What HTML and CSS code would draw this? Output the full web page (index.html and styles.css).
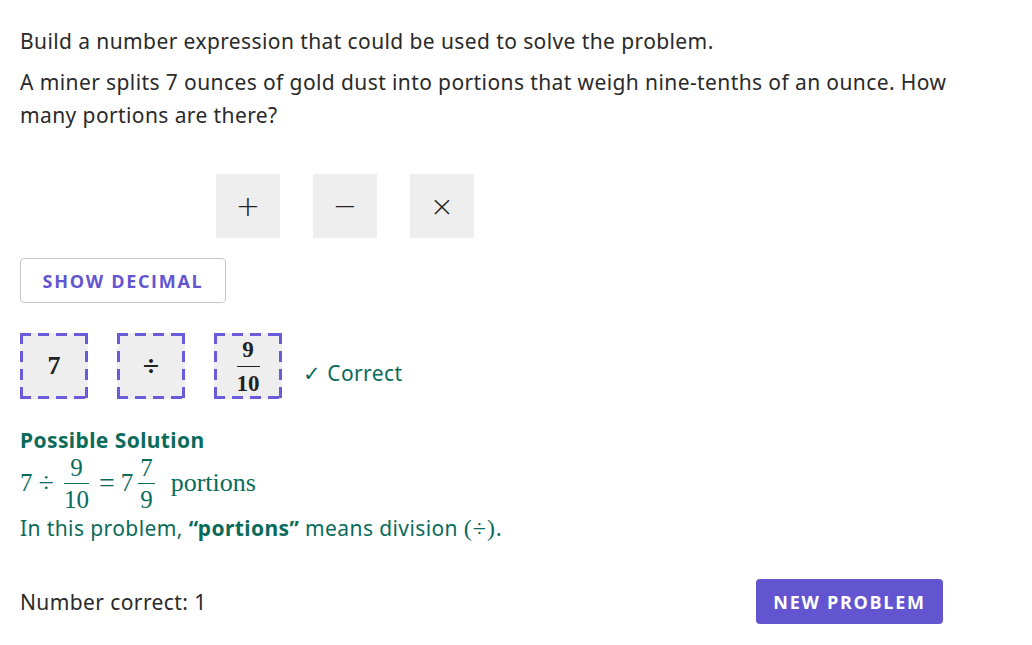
FILE: index.html
```html
<!DOCTYPE html>
<html lang="en">
<head>
<meta charset="utf-8">
<title>Build a number expression</title>
<link rel="stylesheet" href="styles.css">
</head>
<body>
<main class="page">
  <p class="prompt">Build a number expression that could be used to solve the problem.</p>
  <p class="problem">A miner splits 7 ounces of gold dust into portions that weigh nine-tenths of an ounce. How many portions are there?</p>

  <div class="palette">
    <div class="tile"><span class="op">+</span></div>
    <div class="tile"><span class="op">&minus;</span></div>
    <div class="tile"><span class="op">&times;</span></div>
  </div>

  <button class="btn-outline">SHOW DECIMAL</button>

  <div class="answer-row">
    <div class="slot"><span class="num">7</span></div>
    <div class="slot"><span class="slot-op">&divide;</span></div>
    <div class="slot">
      <span class="frac slot-frac"><span class="frac-top">9</span><span class="frac-bot">10</span></span>
    </div>
    <div class="feedback">&#10003; Correct</div>
  </div>

  <section class="solution">
    <h3 class="solution-title">Possible Solution</h3>
    <div class="math">
      <span>7</span><span class="mop">&divide;</span>
      <span class="frac"><span class="frac-top">9</span><span class="frac-bot">10</span></span>
      <span class="mop">=</span><span>7</span>
      <span class="frac mixed"><span class="frac-top">7</span><span class="frac-bot">9</span></span>
      <span class="word">portions</span>
    </div>
    <p class="explain">In this problem, <strong>&ldquo;portions&rdquo;</strong> means division <span class="paren">(&divide;)</span>.</p>
  </section>

  <footer class="footer">
    <span class="count">Number correct: 1</span>
    <button class="btn-primary">NEW PROBLEM</button>
  </footer>
</main>
</body>
</html>
```

FILE: styles.css
```css
* { box-sizing: border-box; }
html, body { margin: 0; padding: 0; background: #ffffff; }
body {
  font-family: "Noto Sans", "Open Sans", sans-serif;
  color: #2a2a2a;
  font-size: 21px;
  letter-spacing: 0.4px;
}
.page {
  width: 1012px;
  padding: 25px 0 0 20px;
}
.prompt {
  margin: 0;
  line-height: 33px;
}
.problem {
  margin: 8px 0 0;
  line-height: 33px;
  max-width: 965px;
}
.palette {
  display: flex;
  gap: 33px;
  margin: 42px 0 0 196px;
}
.tile {
  width: 64px;
  height: 64px;
  background: #eeeeee;
  display: flex;
  align-items: center;
  justify-content: center;
}
.op {
  font-family: "DejaVu Sans", sans-serif;
  font-weight: 200;
  font-size: 29px;
  line-height: 1;
  color: #222;
  letter-spacing: 0;
}
.btn-outline {
  display: block;
  margin-top: 20px;
  width: 206px;
  height: 45px;
  border: 1px solid #c8c8cc;
  border-radius: 4px;
  background: #fff;
  color: #6355d0;
  font-family: "Open Sans", sans-serif;
  font-weight: 700;
  font-size: 18px;
  letter-spacing: 1.7px;
  padding: 0;
}
.answer-row {
  display: flex;
  align-items: center;
  gap: 29px;
  margin-top: 30px;
}
.slot {
  width: 68px;
  height: 66px;
  display: flex;
  align-items: center;
  justify-content: center;
  background:
    repeating-linear-gradient(90deg, #6a5bd8 0 11px, transparent 11px 18px) left top / 100% 3px no-repeat,
    repeating-linear-gradient(90deg, #6a5bd8 0 11px, transparent 11px 18px) left bottom / 100% 3px no-repeat,
    repeating-linear-gradient(180deg, #6a5bd8 0 11px, transparent 11px 18px) left top / 3px 100% no-repeat,
    repeating-linear-gradient(180deg, #6a5bd8 0 11px, transparent 11px 18px) right top / 3px 100% no-repeat,
    #eeeeee;
}
.num {
  font-family: "Liberation Serif", serif;
  font-weight: 700;
  font-size: 26px;
  color: #222;
  letter-spacing: 0;
}
.slot-op {
  font-family: "Liberation Serif", serif;
  font-weight: 700;
  font-size: 30px;
  line-height: 1;
  color: #222;
  letter-spacing: 0;
}
.frac {
  display: inline-flex;
  flex-direction: column;
  align-items: center;
  font-family: "Liberation Serif", serif;
  letter-spacing: 0;
}
.frac-top {
  align-self: stretch;
  text-align: center;
  padding: 0 3px 3px;
  border-bottom: 1px solid currentColor;
}
.frac-bot { padding-top: 2px; }
.slot-frac {
  font-weight: 700;
  font-size: 23px;
  line-height: 23px;
  color: #222;
}
.slot-frac .frac-top { padding-bottom: 5px; }
.slot-frac .frac-bot { padding-top: 5px; }
.feedback {
  margin-left: -8px;
  padding-top: 14px;
  color: #0a6b5b;
  font-size: 21px;
}
.solution {
  margin-top: 28px;
  color: #0a6b5b;
}
.solution-title {
  margin: 0;
  font-size: 21px;
  font-weight: 700;
  line-height: 26px;
}
.math {
  display: flex;
  align-items: center;
  margin-top: 2px;
  font-family: "Liberation Serif", serif;
  font-size: 25px;
  height: 56px;
  letter-spacing: 0;
}
.math .frac { line-height: 23px; margin: 0 4px; }
.math .frac .frac-top { padding: 0 4px 4px; }
.math .frac .frac-bot { padding-top: 4px; }
.math .frac.mixed { margin-left: 5px; }
.math .frac.mixed .frac-top { padding: 0 2px 4px; }
.mop { margin: 0 6px; font-size: 28px; }
.word { margin-left: 12px; font-size: 26px; }
.explain {
  margin: 0;
  line-height: 34px;
}
.explain strong { font-weight: 700; }
.paren { font-family: "Liberation Serif", serif; font-size: 24px; letter-spacing: 1px; }
.footer {
  width: 923px;
  display: flex;
  justify-content: space-between;
  align-items: center;
  margin-top: 34px;
}
.count { font-size: 21px; }
.btn-primary {
  width: 187px;
  height: 45px;
  border: none;
  border-radius: 4px;
  background: #6355d0;
  color: #fff;
  font-family: "Open Sans", sans-serif;
  font-weight: 700;
  font-size: 18px;
  letter-spacing: 1.7px;
  padding: 0;
}
```
